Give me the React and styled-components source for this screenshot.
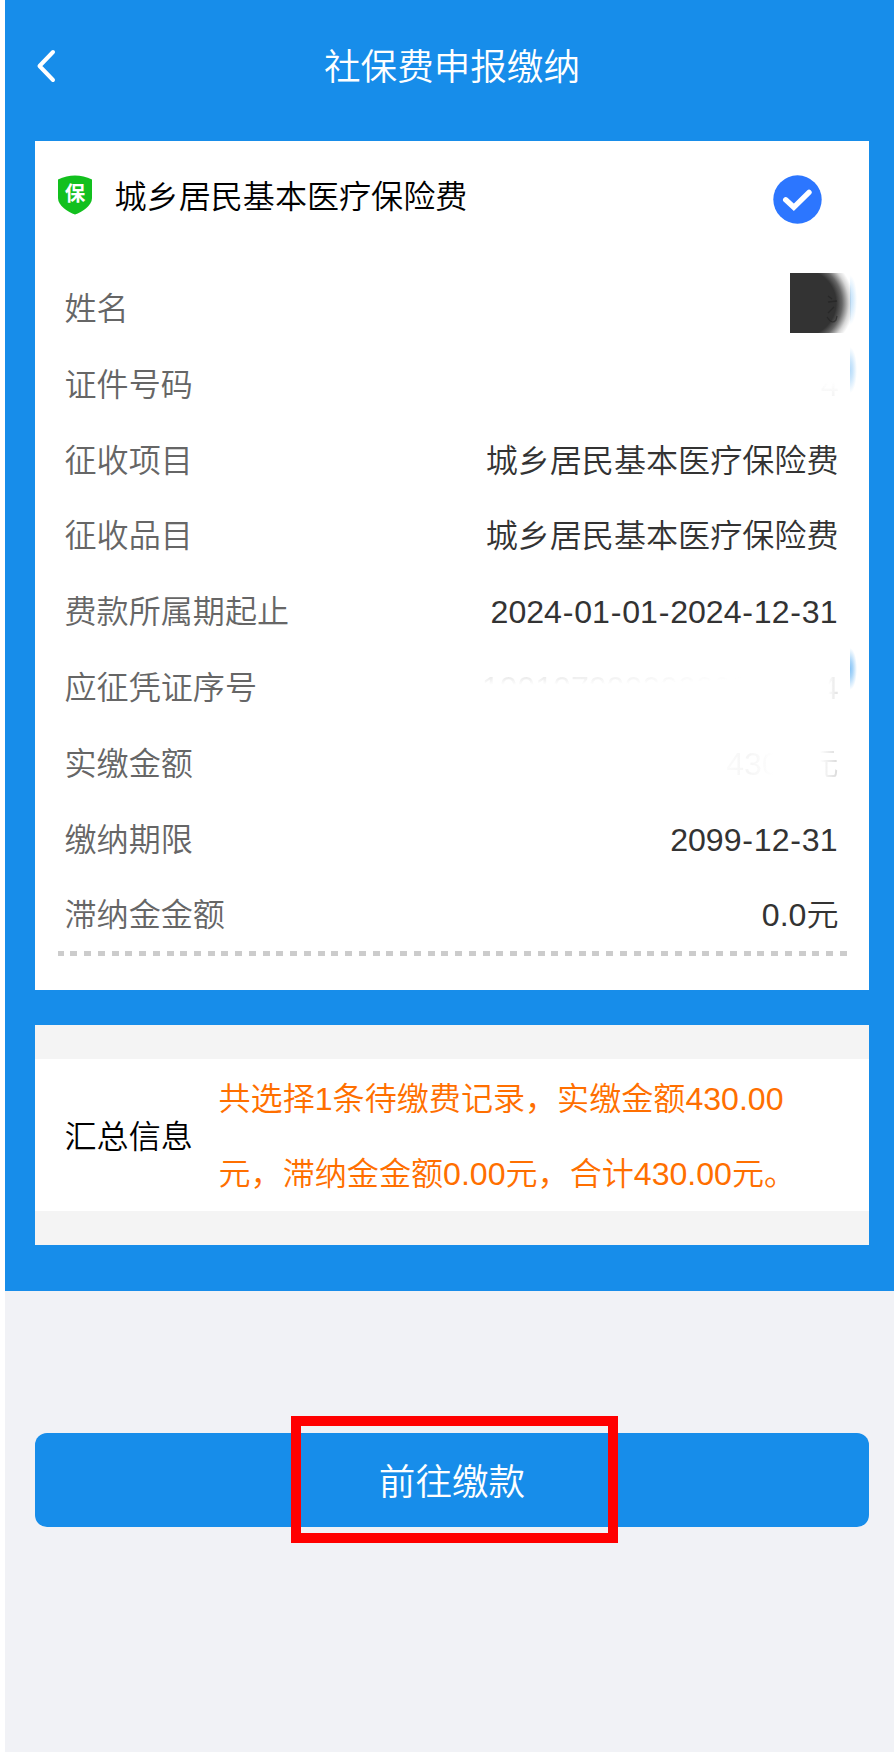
import React from 'react';
import styled, { createGlobalStyle } from 'styled-components';

const GlobalStyle = createGlobalStyle`
  * {
    box-sizing: border-box;
  }
  body {
    margin: 0;
    background: #ffffff;
    font-family: 'Liberation Sans', 'Noto Sans CJK SC', sans-serif;
    font-size: 32.1px;
    font-weight: 350;
    overflow-x: hidden;
  }
`;

const Screen = styled.div`
  min-height: 1752px;
  margin-left: 5px;
  background: #f1f2f6;
`;

const BlueArea = styled.div`
  height: 1291px;
  padding: 0 25px 0 30px;
  background: #178dea;
`;

const Header = styled.header`
  display: grid;
  grid-template-columns: 60px 1fr 60px;
  align-items: center;
  height: 141px;
  padding-bottom: 9px;
`;

const BackIcon = styled.svg`
  display: block;
  width: 20px;
  height: 34px;
  margin-left: 1px;
`;

const Title = styled.h1`
  margin: 0;
  padding-top: 4px;
  font-size: 36.6px;
  font-weight: 350;
  line-height: 54px;
  text-align: center;
  color: #ffffff;
`;

const Card = styled.section`
  height: 849px;
  background: #ffffff;
`;

const CardHeader = styled.div`
  display: flex;
  align-items: center;
  height: 130px;
  padding: 0 47px 18px 23px;
`;

const ShieldIcon = styled.svg`
  width: 34px;
  height: 40px;
  margin-bottom: 5px;
`;

const CardTitle = styled.h2`
  flex: 1;
  margin: 0 0 0 22.5px;
  font-size: 32.1px;
  font-weight: 350;
  line-height: 48px;
  color: #000000;
`;

const CheckIcon = styled.svg`
  width: 49px;
  height: 49px;
  margin-top: 4px;
`;

const Rows = styled.dl`
  height: 680px;
  margin: 0;
  padding: 1px 30.5px 0 29.5px;
`;

const Row = styled.div`
  position: relative;
  display: flex;
  justify-content: space-between;
  height: 75.8px;
  line-height: 75.8px;
`;

const Label = styled.dt`
  color: #666666;
`;

const Value = styled.dd`
  margin: 0;
  color: #333333;
`;

// Las fechas quedan un poco más a la izquierda
const DateValue = styled(Value)`
  padding-right: 1px;
`;

const Hyphen = styled.span`
  padding: 0 0.8px;
`;

// Valor borrado, solo quedan restos muy tenues
const FadedValue = styled(Value)`
  color: transparent;
  background: ${(props) => props.$trace};
  -webkit-background-clip: text;
  background-clip: text;
`;

// Tapa oscura sobre el nombre
const NameMask = styled.span`
  position: absolute;
  top: 0.5px;
  right: -12.5px;
  width: 61px;
  height: 60px;
  background: radial-gradient(circle at 13px 30px, #333333 33px, rgba(51, 51, 51, 0.75) 39px, rgba(51, 51, 51, 0.2) 46px, transparent 51px);
`;

const Stroke = styled.svg`
  position: absolute;
  left: 35px;
  top: 20px;
  width: 16px;
  height: 32px;
`;

// Mancha azul en el borde derecho
const Smudge = styled.span`
  position: absolute;
  top: ${(props) => props.$top}px;
  right: -19.5px;
  width: 8px;
  height: ${(props) => props.$height}px;
  opacity: ${(props) => props.$strength};
  background: radial-gradient(ellipse 7px 50% at 0 50%, #78bdf5, rgba(120, 189, 245, 0.7) 40%, transparent);
`;

const Divider = styled.div`
  height: 5px;
  margin: 0 22px 0 23px;
  background: repeating-linear-gradient(90deg, #cccccc 0 7px, transparent 7px 13.74px);
  background-position: -1.4px 0;
  background-size: 900px 5px;
`;

const Summary = styled.section`
  margin-top: 34.5px;
  height: 220.5px;
  padding: 34.5px 0;
  background: #f4f4f4;
`;

const SummaryBody = styled.div`
  display: flex;
  align-items: center;
  height: 151.6px;
  padding-left: 29.5px;
  background: #ffffff;
`;

const SummaryLabel = styled.div`
  width: 154px;
  padding-bottom: 2px;
  color: #000000;
`;

const SummaryText = styled.p`
  width: 584px;
  margin: 0;
  padding-top: 5px;
  line-height: 75.8px;
  color: #ff6f00;
`;

const Footer = styled.footer`
  position: relative;
  padding: 142px 25px 0 30px;
`;

const PayButton = styled.button`
  display: block;
  width: 100%;
  height: 94px;
  padding: 5px 0 0;
  border: 0;
  border-radius: 12px;
  background: #178dea;
  color: #ffffff;
  font-family: inherit;
  font-size: 36.6px;
  font-weight: 350;
  line-height: 89px;
`;

// Recuadro rojo que resalta el botón
const Highlight = styled.div`
  position: absolute;
  top: 124.5px;
  left: 286px;
  width: 327px;
  height: 127.5px;
  border: 10.5px solid #ff0000;
  pointer-events: none;
`;

const withHyphens = (text) =>
  text.split('-').map((part, i) => (
    <React.Fragment key={i}>
      {i > 0 && <Hyphen>-</Hyphen>}
      {part}
    </React.Fragment>
  ));

const App = () => {
  return (
    <>
      <GlobalStyle />
      <Screen>
        <BlueArea>
          <Header>
            <BackIcon viewBox="0 0 20 34" fill="none">
              <path d="M17 3 L3.5 17 L17 31" stroke="#fff" strokeWidth="4" strokeLinecap="round" strokeLinejoin="round" />
            </BackIcon>
            <Title>社保费申报缴纳</Title>
          </Header>

          <Card>
            <CardHeader>
              <ShieldIcon viewBox="0 0 34 40">
                <path d="M0 4.5 Q17 -3.5 34 4.5 V23 C34 31 24 37 17 39.5 C10 37 0 31 0 23 Z" fill="#12c01e" />
                <text x="17" y="26" textAnchor="middle" fontSize="20.5" fontWeight="700" fill="#fff" fontFamily="'Noto Sans CJK SC', sans-serif">保</text>
              </ShieldIcon>
              <CardTitle>城乡居民基本医疗保险费</CardTitle>
              <CheckIcon viewBox="0 0 49 49" fill="none">
                <circle cx="24.5" cy="24.5" r="24.2" fill="#2c76ff" />
                <path d="M12.7 24.8 L20.8 32.3 L36 17.3" stroke="#fff" strokeWidth="5.4" strokeLinecap="round" strokeLinejoin="miter" />
              </CheckIcon>
            </CardHeader>

            <Rows>
              <Row>
                <Label>姓名</Label>
                <NameMask>
                  <Stroke viewBox="0 0 16 32" fill="none">
                    <path d="M3 3 L7 6 M3 9 L12 8 M9 14 L3 20 M2 24 Q7 32 11 27 L12 23" stroke="#222" strokeWidth="1.3" opacity="0.6" />
                  </Stroke>
                </NameMask>
                <Smudge $top={3} $height={50} $strength={0.45} />
              </Row>
              <Row>
                <Label>证件号码</Label>
                <FadedValue $trace="linear-gradient(180deg, transparent 45%, #f3f3f3 65%)">4</FadedValue>
                <Smudge $top={-1} $height={46} $strength={0.55} />
              </Row>
              <Row>
                <Label>征收项目</Label>
                <Value>城乡居民基本医疗保险费</Value>
              </Row>
              <Row>
                <Label>征收品目</Label>
                <Value>城乡居民基本医疗保险费</Value>
              </Row>
              <Row>
                <Label>费款所属期起止</Label>
                <DateValue>{withHyphens('2024-01-01-2024-12-31')}</DateValue>
              </Row>
              <Row>
                <Label>应征凭证序号</Label>
                <FadedValue $trace="linear-gradient(90deg, transparent 97%, #dddddd 100%), radial-gradient(ellipse 230px 8px at 30px 34%, #e9e9e9, transparent)">
                  10010700000000000004
                </FadedValue>
                <Smudge $top={-3} $height={42} $strength={0.9} />
              </Row>
              <Row>
                <Label>实缴金额</Label>
                <FadedValue $trace="linear-gradient(90deg, #fbfbfb 0, #f5f5f5 20%, transparent 42%, transparent 83%, #d8d8d8 100%)">
                  430.0元
                </FadedValue>
              </Row>
              <Row>
                <Label>缴纳期限</Label>
                <DateValue>{withHyphens('2099-12-31')}</DateValue>
              </Row>
              <Row>
                <Label>滞纳金金额</Label>
                <Value>0.0元</Value>
              </Row>
            </Rows>
            <Divider />
          </Card>

          <Summary>
            <SummaryBody>
              <SummaryLabel>汇总信息</SummaryLabel>
              <SummaryText>
                共选择1条待缴费记录，实缴金额430.00元，滞纳金金额0.00元，合计430.00元。
              </SummaryText>
            </SummaryBody>
          </Summary>
        </BlueArea>

        <Footer>
          <PayButton>前往缴款</PayButton>
          <Highlight />
        </Footer>
      </Screen>
    </>
  );
};

export default App;
